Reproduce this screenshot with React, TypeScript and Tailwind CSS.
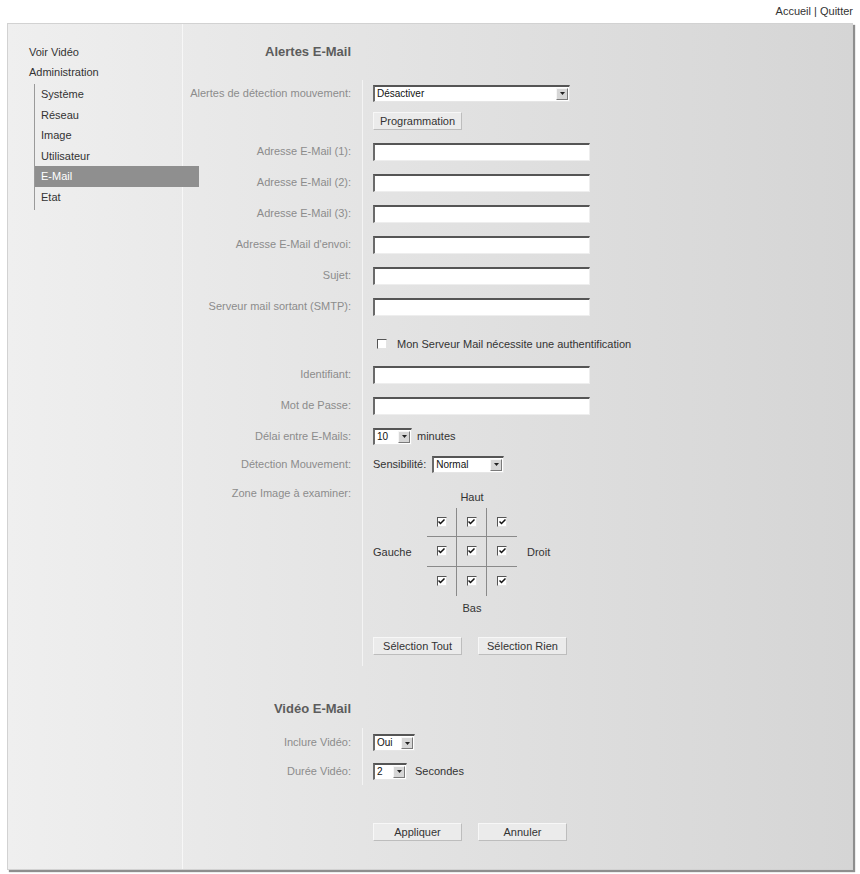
import React from 'react'

const font = "font-['Liberation_Sans',Arial,sans-serif]"

function Arrow() {
  return (
    <div className="w-[12px] h-[12px] mr-[1px] flex items-center justify-center bg-[#d6d6d6] border-t border-l border-t-[#f6f6f6] border-l-[#f6f6f6] border-r border-b border-r-[#7a7a7a] border-b-[#7a7a7a]">
      <svg width="5" height="3" viewBox="0 0 5 3"><polygon points="0,0 5,0 2.5,3" fill="#222" /></svg>
    </div>
  )
}

function Select({ value, className }: { value: string; className: string }) {
  return (
    <div className={`${className} h-[17px] flex items-center justify-between bg-white border-t-2 border-l-2 border-t-[#555] border-l-[#6a6a6a] border-r border-b border-r-[#e6e6e6] border-b-[#e6e6e6]`}>
      <span className="pl-[2px] text-[10px] text-[#111] leading-none">{value}</span>
      <Arrow />
    </div>
  )
}

function Input() {
  return <div className="w-[217px] h-[18px] bg-white border-t-2 border-l-2 border-t-[#555] border-l-[#6a6a6a] border-r border-b border-r-[#eeeeee] border-b-[#eeeeee]" />
}

function Btn({ children, className }: { children: React.ReactNode; className: string }) {
  return (
    <div className={`${className} h-[18px] flex items-center justify-center bg-[#ebebeb] border-t border-l border-t-[#f7f7f7] border-l-[#f7f7f7] border-r border-b border-r-[#bdbdbd] border-b-[#bdbdbd] text-[11px] text-[#333]`}>
      {children}
    </div>
  )
}

function Check({ on }: { on?: boolean }) {
  return (
    <div className="w-[10px] h-[10px] bg-white border-t border-l border-t-[#555] border-l-[#555] border-r border-b border-r-[#e4e4e4] border-b-[#e4e4e4] flex items-center justify-center">
      {on && (
        <svg width="7" height="6" viewBox="0 0 7 6"><path d="M0.5 2.5 L2.5 4.5 L6.5 0.5" stroke="#111" strokeWidth="1.5" fill="none" /></svg>
      )}
    </div>
  )
}

function Row({ label, h, children, top }: { label?: string; h: string; children?: React.ReactNode; top?: boolean }) {
  return (
    <div className={`flex ${h}`}>
      <div className={`w-[168px] flex justify-end text-[11px] text-[#8c8c8c] whitespace-nowrap ${top ? 'items-start pt-[8px]' : 'items-center'}`}>{label}</div>
      <div className={`ml-[11px] border-l border-[#f4f4f4] pl-[10px] flex-1 flex ${top ? 'items-start' : 'items-center'}`}>{children}</div>
    </div>
  )
}

const menu = ['Système', 'Réseau', 'Image', 'Utilisateur', 'E-Mail', 'Etat']

export default function App() {
  return (
    <div className={`${font} bg-white w-[860px] h-[874px]`}>
      <div className="h-[23px] flex items-center justify-end pr-[7px] text-[11px] text-[#333]">Accueil | Quitter</div>

      <div className="ml-[7px] w-[846px] flex bg-linear-to-r from-[#efefef] to-[#d5d5d5] border border-[#d2d2d2] shadow-[2px_2px_1px_#8e8e8e]">
        {/* sidebar */}
        <div className="w-[175px] border-r border-[#f7f7f7] pl-[21px] pt-[18px] text-[11px] text-[#333]">
          <div className="h-[20px] flex items-center">Voir Vidéo</div>
          <div className="h-[20px] flex items-center">Administration</div>
          <div className="ml-[5px] mt-[2px] pt-[0px] border-l border-[#9a9a9a] pb-[3px]">
            {menu.map(m =>
              m === 'E-Mail' ? (
                <div key={m} className="relative z-10 w-[164px] h-[20.5px] flex items-center pl-[6px] bg-[#8f8f8f] text-white">{m}</div>
              ) : (
                <div key={m} className="h-[20.5px] flex items-center pl-[6px]">{m}</div>
              )
            )}
          </div>
        </div>

        {/* main */}
        <div className="flex-1 pt-[20px] pb-[28px]">
          <div className="w-[168px] text-right text-[13px] font-bold text-[#5c5c5c] leading-[16px]">Alertes E-Mail</div>

          <div className="mt-[20px]">
            <Row label="Alertes de détection mouvement:" h="h-[26px]">
              <Select value="Désactiver" className="w-[197px]" />
            </Row>
            <Row h="h-[30px]">
              <Btn className="w-[89px]">Programmation</Btn>
            </Row>
            <Row label="Adresse E-Mail (1):" h="h-[31px]"><Input /></Row>
            <Row label="Adresse E-Mail (2):" h="h-[31px]"><Input /></Row>
            <Row label="Adresse E-Mail (3):" h="h-[31px]"><Input /></Row>
            <Row label="Adresse E-Mail d'envoi:" h="h-[31px]"><Input /></Row>
            <Row label="Sujet:" h="h-[31px]"><Input /></Row>
            <Row label="Serveur mail sortant (SMTP):" h="h-[31px]"><Input /></Row>
            <div className="flex h-[37px]">
              <div className="w-[168px]" />
              <div className="ml-[11px] border-l border-[#f4f4f4] pl-[14px] pt-[17px] flex items-start gap-[10px]">
                <Check />
                <span className="text-[11px] text-[#333] leading-[11px]">Mon Serveur Mail nécessite une authentification</span>
              </div>
            </div>
            <Row label="Identifiant:" h="h-[31px]"><Input /></Row>
            <Row label="Mot de Passe:" h="h-[31px]"><Input /></Row>
            <Row label="Délai entre E-Mails:" h="h-[30px]">
              <Select value="10" className="w-[39px]" />
              <span className="ml-[5px] text-[11px] text-[#333]">minutes</span>
            </Row>
            <Row label="Détection Mouvement:" h="h-[26px]">
              <span className="text-[11px] text-[#333]">Sensibilité:</span>
              <Select value="Normal" className="w-[72px] ml-[6px]" />
            </Row>
            <Row label="Zone Image à examiner:" h="h-[189px]" top>
              <div className="pt-[14px]">
                <div className="grid grid-cols-[54px_90px_auto] text-[11px] text-[#333]">
                  <div />
                  <div className="h-[17px] text-center leading-[13px]">Haut</div>
                  <div />
                  <div className="flex items-center">Gauche</div>
                  <div className="grid grid-cols-3">
                    {[0, 1, 2, 3, 4, 5, 6, 7, 8].map(i => (
                      <div
                        key={i}
                        className={`h-[29.3px] flex items-center justify-center ${i % 3 < 2 ? 'border-r border-[#8a8a8a]' : ''} ${i < 6 ? 'border-b border-b-[#8a8a8a]' : ''}`}
                      >
                        <Check on />
                      </div>
                    ))}
                  </div>
                  <div className="flex items-center pl-[10px]">Droit</div>
                  <div />
                  <div className="pt-[6px] text-center leading-[13px]">Bas</div>
                  <div />
                </div>
                <div className="mt-[22px] flex gap-[16px]">
                  <Btn className="w-[89px]">Sélection Tout</Btn>
                  <Btn className="w-[89px]">Sélection Rien</Btn>
                </div>
              </div>
            </Row>
          </div>

          <div className="mt-[35px] w-[168px] text-right text-[13px] font-bold text-[#5c5c5c] leading-[16px]">Vidéo E-Mail</div>

          <div className="mt-[11px]">
            <Row label="Inclure Vidéo:" h="h-[29px]">
              <Select value="Oui" className="w-[42px]" />
            </Row>
            <Row label="Durée Vidéo:" h="h-[28px]">
              <Select value="2" className="w-[34px]" />
              <span className="ml-[8px] text-[11px] text-[#333]">Secondes</span>
            </Row>
          </div>

          <div className="mt-[38px] ml-[190px] flex gap-[16px]">
            <Btn className="w-[89px]">Appliquer</Btn>
            <Btn className="w-[89px]">Annuler</Btn>
          </div>
        </div>
      </div>
    </div>
  )
}
